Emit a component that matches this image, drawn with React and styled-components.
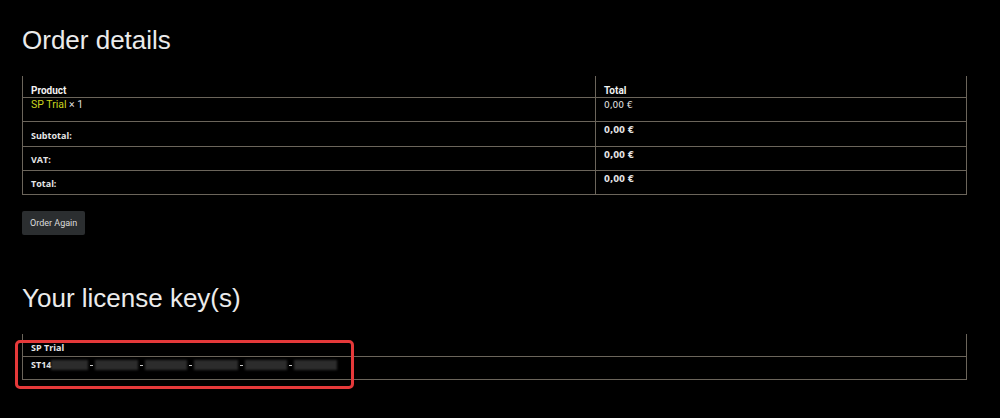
import styled, { createGlobalStyle } from "styled-components";

const GlobalStyle = createGlobalStyle`
  html, body {
    margin: 0;
    padding: 0;
    background: #000;
  }
  body {
    font-family: "Liberation Sans", Arial, sans-serif;
    color: #e6e6e6;
  }
`;

const Page = styled.main`
  padding: 25px 0 40px 22px;
  width: 945px;
`;

const Heading = styled.h2`
  margin: 0 0 20px;
  font-family: "Liberation Sans", Arial, sans-serif;
  font-weight: 400;
  font-size: 26px;
  line-height: 31px;
  color: #ebebeb;
`;

const Table = styled.div`
  display: grid;
  grid-template-columns: ${(p) => p.$cols || "1fr"};
  width: 945px;
  box-sizing: border-box;
  border-left: 1px solid #6b655b;
  border-right: 1px solid #6b655b;
  position: relative;
`;

const Cell = styled.div`
  display: flex;
  align-items: flex-start;
  border-bottom: 1px solid #6b655b;
  border-left: ${(p) => (p.$divider ? "1px solid #6b655b" : "none")};
  padding: ${(p) => p.$pad || "0"};
  padding-left: 8px;
  white-space: nowrap;
`;

const HeadText = styled.span`
  font-family: Roboto, "Liberation Sans", sans-serif;
  font-weight: 700;
  font-size: 10px;
  line-height: 12px;
  color: #f2f2f2;
`;

const Label = styled.span`
  font-family: "Open Sans", "Liberation Sans", sans-serif;
  font-weight: 700;
  font-size: 9px;
  line-height: 12px;
  color: #e6e6e6;
`;

const Amount = styled.span`
  font-family: "DejaVu Sans", Verdana, sans-serif;
  font-weight: ${(p) => (p.$bold ? 700 : 400)};
  font-size: ${(p) => (p.$bold ? 8.5 : 9)}px;
  line-height: 12px;
  color: #e4e4e4;
`;

const ProductLine = styled.span`
  font-family: Roboto, "Liberation Sans", sans-serif;
  font-size: 10.5px;
  line-height: 12px;
  color: #dedede;
`;

const ProductName = styled.span`
  color: #c9d41e;
`;

const Button = styled.button`
  display: block;
  margin: 16px 0 48px;
  height: 24px;
  padding: 0 8px;
  border: none;
  border-radius: 2px;
  background: #2b2e30;
  color: #dcdcdc;
  font-family: Roboto, "Liberation Sans", sans-serif;
  font-size: 9px;
  line-height: 24px;
  cursor: pointer;
`;

const KeyRow = styled.div`
  display: flex;
  align-items: center;
  height: 12px;
`;

const Hidden = styled.span`
  display: inline-block;
  width: ${(p) => p.$w}px;
  height: 10px;
  margin-left: ${(p) => p.$ml || 0}px;
  background: #2c2c2c;
  filter: blur(1.2px);
`;

const Dash = styled.span`
  display: inline-block;
  width: 3px;
  height: 1px;
  margin-left: 2px;
  background: #cfcfcf;
`;

const Highlight = styled.div`
  position: absolute;
  left: -8px;
  top: 6px;
  width: 339px;
  height: 49px;
  box-sizing: border-box;
  border: 3px solid #e5393a;
  border-radius: 5px;
  pointer-events: none;
`;

const rows = [
  { label: "Subtotal:", pad: ["8px 0 4px", "2px 0 10px"] },
  { label: "VAT:", pad: ["7px 0 4px", "2px 0 9px"] },
  { label: "Total:", pad: ["7px 0 4px", "2px 0 9px"] },
];

const keyParts = [
  { w: 37 },
  { w: 43 },
  { w: 42 },
  { w: 44 },
  { w: 42 },
  { w: 43 },
];

export default function App() {
  return (
    <>
      <GlobalStyle />
      <Page>
        <Heading>Order details</Heading>
        <Table $cols="572px 1fr">
          <Cell $pad="9px 0 0">
            <HeadText>Product</HeadText>
          </Cell>
          <Cell $divider $pad="9px 0 0">
            <HeadText>Total</HeadText>
          </Cell>
          <Cell $pad="1px 0 10px">
            <ProductLine>
              <ProductName>SP Trial</ProductName> × 1
            </ProductLine>
          </Cell>
          <Cell $divider $pad="1px 0 10px">
            <Amount>0,00 €</Amount>
          </Cell>
          {rows.flatMap((r) => [
            <Cell key={r.label + "l"} $pad={r.pad[0]}>
              <Label>{r.label}</Label>
            </Cell>,
            <Cell key={r.label + "v"} $divider $pad={r.pad[1]}>
              <Amount $bold>0,00 €</Amount>
            </Cell>,
          ])}
        </Table>
        <Button>Order Again</Button>

        <Heading>Your license key(s)</Heading>
        <Table>
          <Cell $pad="8px 0 2px">
            <Label>SP Trial</Label>
          </Cell>
          <Cell $pad="2px 0 8px">
            <KeyRow>
              <Label>ST14</Label>
              {keyParts.flatMap((k, i) => [
                i > 0 ? <Dash key={"d" + i} /> : null,
                <Hidden key={"h" + i} $w={k.w} $ml={i > 0 ? 2 : 0} />,
              ])}
            </KeyRow>
          </Cell>
          <Highlight />
        </Table>
      </Page>
    </>
  );
}
